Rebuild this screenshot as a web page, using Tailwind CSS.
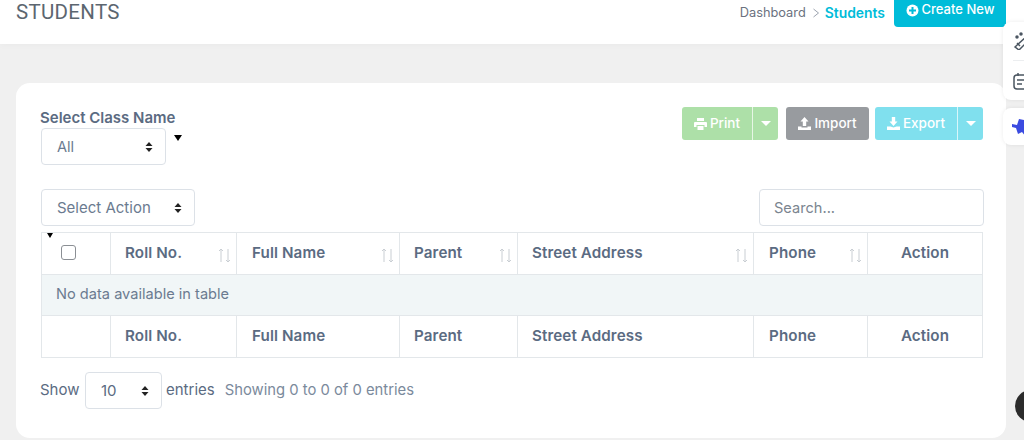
<!DOCTYPE html>
<html><head><meta charset="utf-8">
<script src="https://cdn.jsdelivr.net/npm/@tailwindcss/browser@4"></script>
</head>
<body class="bg-[#f0f0f0] font-['Inter',sans-serif] text-[#5b6b82] overflow-hidden">
<div class="relative w-[1024px] h-[440px] overflow-hidden">
  <header class="h-[44px] bg-white shadow-[0_2px_6px_rgba(0,0,0,0.025)] flex items-start pl-[16px] pr-[18px]">
    <h1 class="text-[20.5px] leading-[24px] text-[#5c6670] font-normal font-['Roboto',sans-serif] tracking-[0.3px]">STUDENTS</h1>
    <div class="ml-auto flex items-start">
      <div class="flex items-center text-[12.800px] leading-[26px] text-[#6b7280] mr-[9px]">
        <span>Dashboard</span>
        <svg class="ml-[6px] mr-[5px]" width="8" height="10" viewBox="0 0 8 10" fill="none" stroke="#9ca3af" stroke-width="1"><path d="M1.500 1l5 4-5 4"/></svg>
        <span class="text-[#00bcd9] text-[13.900px] font-semibold">Students</span>
      </div>
      <button class="h-[27px] w-[112px] bg-[#00bcd9] text-white rounded-b-[4px] flex items-center justify-center gap-[3px] text-[13px] font-medium pb-[7px]">
        <svg width="13" height="13" viewBox="0 0 13 13"><circle cx="6.500" cy="6.500" r="6" fill="#fff"/><path d="M6.500 3v7M3 6.500h7" stroke="#00bcd9" stroke-width="2"/></svg>
        Create New
      </button>
    </div>
  </header>

  <main class="ml-[16px] mt-[39px] w-[990px] h-[355px] bg-white rounded-[14px] px-[24px] pt-[24px] relative">
    <div class="flex items-start justify-between h-[82px]">
      <div class="relative">
        <label class="block text-[15px] leading-[20px] font-semibold text-[#5b6b82] mt-[1px]">Select Class Name</label>
        <div class="ml-[1px] w-[125px] h-[37px] border border-[#dce1e7] rounded-[4px] flex items-center justify-between pl-[15px] pr-[12px] pt-[2px] text-[14.600px] text-[#6b7b90]">
          <span>All</span>
          <svg class="mb-[2px]" width="8" height="12" viewBox="0 0 8 12" fill="#222"><path d="M4 1l3.500 4h-7zM4 11l3.500-4h-7z"/></svg>
        </div>
        <span class="absolute left-[134px] top-[28px] w-0 h-0 border-x-[4px] border-x-transparent border-t-[6px] border-t-black"></span>
      </div>
      <div class="flex mr-[-1px] text-white text-[13.500px] font-medium">
        <div class="flex h-[33px] rounded-[3px] overflow-hidden bg-[#ade0a8] w-[96px]">
          <span class="w-[71px] flex items-center justify-center gap-[3px] border-r border-white/70">
            <svg width="13" height="12" viewBox="0 0 13 12" fill="#fff"><path d="M3 0h7v3H3zM1 4h11a1 1 0 011 1v4h-2.500V7h-8v2H0V5a1 1 0 011-1zM3.500 8h6v4h-6z"/></svg>Print</span>
          <span class="flex-1 flex items-center justify-center"><span class="w-0 h-0 border-x-[5px] border-x-transparent border-t-[5px] border-t-white"></span></span>
        </div>
        <div class="ml-[8px] flex h-[33px] w-[83px] rounded-[3px] bg-[#989b9f] items-center justify-center gap-[3px]">
          <svg width="13" height="13" viewBox="0 0 13 13" fill="#fff"><path d="M6.500 0l4 4.500H8.200V9H4.800V4.500H2.500zM0 9.500h3.500v1h6v-1H13V13H0z"/></svg>Import</div>
        <div class="ml-[6px] flex h-[33px] rounded-[3px] overflow-hidden bg-[#80e0ee] w-[108px]">
          <span class="w-[83px] flex items-center justify-center gap-[3px] border-r border-white/70">
            <svg width="13" height="13" viewBox="0 0 13 13" fill="#fff"><path d="M4.800 0h3.400v4.500h2.300l-4 4.500-4-4.500h2.300zM0 9.500h3.500l3 1 3-1H13V13H0z"/></svg>Export</span>
          <span class="flex-1 flex items-center justify-center"><span class="w-0 h-0 border-x-[5px] border-x-transparent border-t-[5px] border-t-white"></span></span>
        </div>
      </div>
    </div>

    <div class="flex items-start justify-between h-[43px] pl-[1px] mr-[-2px]">
      <div class="w-[154px] h-[37px] border border-[#dce1e7] rounded-[4px] flex items-center justify-between pl-[15px] pr-[12px] pt-[2px] text-[15px] text-[#6b7b90]">
        <span>Select Action</span>
        <svg class="mb-[2px]" width="8" height="12" viewBox="0 0 8 12" fill="#222"><path d="M4 1l3.500 4h-7zM4 11l3.500-4h-7z"/></svg>
      </div>
      <div class="w-[225px] h-[37px] border border-[#dce1e7] rounded-[4px] flex items-center pl-[14px] pt-[2px] text-[14.600px] text-[#7b8590]">Search...</div>
    </div>

    <div class="relative">
      <span class="absolute left-[7px] top-[1px] w-0 h-0 border-x-[3.500px] border-x-transparent border-t-[5px] border-t-black"></span>
      <table class="w-[941px] ml-[1px] border-collapse table-fixed text-[15.200px] tracking-[0.1px] text-[#5b6b82]">
        <colgroup><col class="w-[69px]"><col class="w-[126px]"><col class="w-[163px]"><col class="w-[118px]"><col class="w-[236px]"><col class="w-[114px]"><col class="w-[115px]"></colgroup>
        <thead>
          <tr class="h-[42px] [&>th]:border [&>th]:border-[#e3e7ea] [&>th]:font-semibold [&>th]:text-left [&>th]:pl-[14px] [&>th]:pb-[1px] [&>th]:relative">
            <th><span class="block ml-[5px] mb-[2px] w-[15px] h-[15px] border border-[#8b8f94] rounded-[3px]"></span></th>
            <th>Roll No.<svg class="absolute right-[5px] top-[15px]" width="13" height="15" viewBox="0 0 13 15" fill="none" stroke="#c9ced3" stroke-width="1"><path d="M3 14V1M1 3l2-2 2 2M10 1v13M8 12l2 2 2-2"/></svg></th>
            <th class="!pl-[15px]">Full Name<svg class="absolute right-[5px] top-[15px]" width="13" height="15" viewBox="0 0 13 15" fill="none" stroke="#c9ced3" stroke-width="1"><path d="M3 14V1M1 3l2-2 2 2M10 1v13M8 12l2 2 2-2"/></svg></th>
            <th>Parent<svg class="absolute right-[5px] top-[15px]" width="13" height="15" viewBox="0 0 13 15" fill="none" stroke="#c9ced3" stroke-width="1"><path d="M3 14V1M1 3l2-2 2 2M10 1v13M8 12l2 2 2-2"/></svg></th>
            <th>Street Address<svg class="absolute right-[5px] top-[15px]" width="13" height="15" viewBox="0 0 13 15" fill="none" stroke="#c9ced3" stroke-width="1"><path d="M3 14V1M1 3l2-2 2 2M10 1v13M8 12l2 2 2-2"/></svg></th>
            <th class="!pl-[15px]">Phone<svg class="absolute right-[5px] top-[15px]" width="13" height="15" viewBox="0 0 13 15" fill="none" stroke="#c9ced3" stroke-width="1"><path d="M3 14V1M1 3l2-2 2 2M10 1v13M8 12l2 2 2-2"/></svg></th>
            <th class="!text-center !pl-0">Action</th>
          </tr>
        </thead>
        <tbody>
          <tr class="h-[41px] bg-[#f1f6f7]"><td colspan="7" class="border border-[#e3e7ea] pl-[14px] text-[14.600px] tracking-normal text-[#6b7b90]">No data available in table</td></tr>
        </tbody>
        <tfoot>
          <tr class="h-[42px] [&>th]:border [&>th]:border-[#e3e7ea] [&>th]:font-semibold [&>th]:text-left [&>th]:pl-[14px] [&>th]:pb-[1px]">
            <th></th><th>Roll No.</th><th class="!pl-[15px]">Full Name</th><th>Parent</th><th>Street Address</th><th class="!pl-[15px]">Phone</th><th class="!text-center !pl-0">Action</th>
          </tr>
        </tfoot>
      </table>
    </div>

    <div class="flex items-center mt-[14px] text-[15px] text-[#6b7b90]">
      <span class="text-[#5b6b82] w-[40px]">Show</span>
      <div class="ml-[5px] w-[77px] h-[37px] border border-[#dce1e7] rounded-[4px] flex items-center justify-between pl-[15px] pr-[12px] pt-[1px] text-[#5b6b82]">
        <span>10</span>
        <svg class="mb-[1px]" width="8" height="12" viewBox="0 0 8 12" fill="#222"><path d="M4 1l3.500 4h-7zM4 11l3.500-4h-7z"/></svg>
      </div>
      <span class="ml-[4px] text-[#5b6b82]">entries</span>
      <span class="ml-[10px] text-[14.800px] text-[#7b8a9c]">Showing 0 to 0 of 0 entries</span>
    </div>
  </main>

  <aside class="absolute left-[1003px] top-[22px] w-[40px] h-[78px] bg-white rounded-l-[8px] shadow-[0_0_4px_rgba(0,0,0,0.08)] flex flex-col items-start pl-[10px]">
    <div class="h-[39px] flex items-center border-b border-[#eceef0] w-full">
      <svg width="18" height="18" viewBox="0 0 18 18" fill="none" stroke="#4a5560" stroke-width="1.500"><path d="M2 15L13 5l3 3-10 10zM4 11l3 3"/><circle cx="4" cy="5" r="1" fill="#4a5560"/><circle cx="8" cy="2" r="1" fill="#4a5560"/></svg>
    </div>
    <div class="h-[39px] flex items-center">
      <svg width="16" height="18" viewBox="0 0 16 18" fill="none" stroke="#4a5560" stroke-width="1.500"><rect x="1" y="3" width="16" height="14" rx="3"/><path d="M5 1v3M4 8h7M4 12h5"/></svg>
    </div>
  </aside>
  <div class="absolute left-[1003px] top-[108px] w-[40px] h-[37px] bg-white rounded-l-[8px] shadow-[0_0_4px_rgba(0,0,0,0.08)] flex items-center pl-[9px]">
    <svg width="14" height="20" viewBox="0 0 14 20" fill="#3b4be0"><path d="M0 7l5 1 2-6 5 1 2-1v18l-4-5-4 2-2-6-4-1z"/></svg>
  </div>
  <div class="absolute left-[1015px] top-[390px] w-[32px] h-[32px] rounded-full bg-[#2b2b2b]"></div>
</div>
</body></html>
